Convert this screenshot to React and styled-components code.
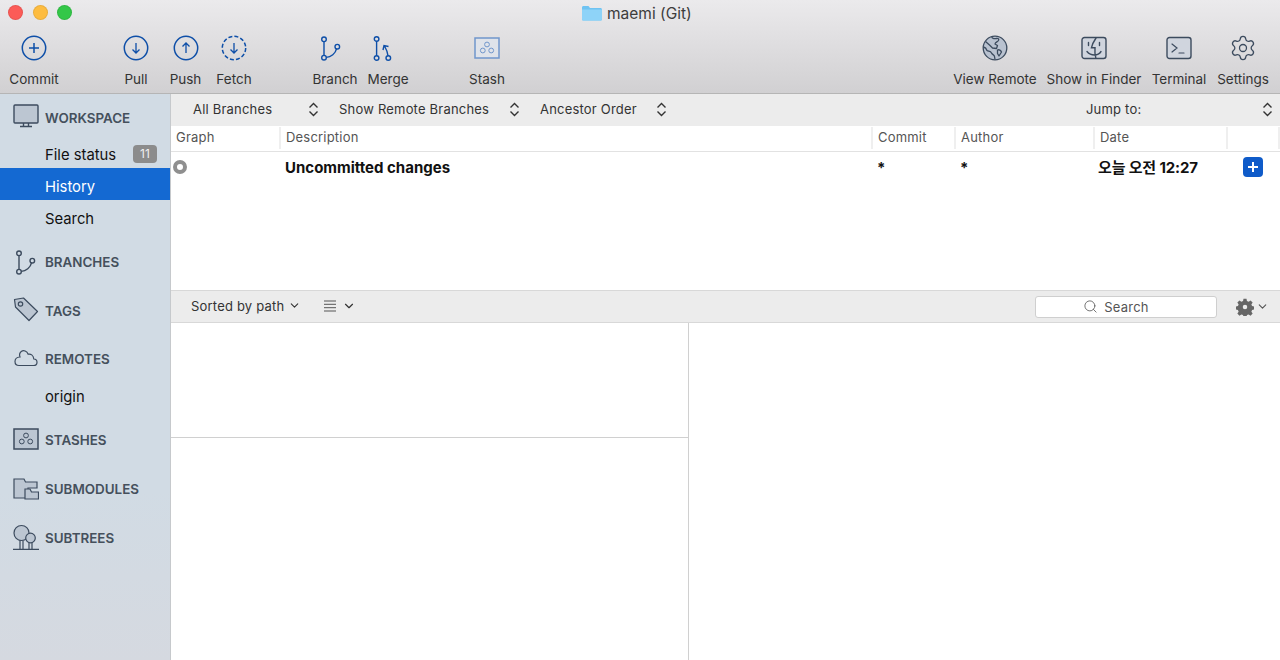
import styled, { createGlobalStyle } from "styled-components";
import { ChevronDown, Search as SearchIcon, Settings as SettingsIcon } from "lucide-react";

const BLUE = "#0e4fa8";
const SLATE = "#3c4b5e";
const FONT = `Inter, "Noto Sans CJK KR", sans-serif`;

const GlobalStyle = createGlobalStyle`
  html, body { margin: 0; padding: 0; height: 100%; overflow: hidden; }
  body { font-family: ${FONT}; color: #222; }
  * { box-sizing: border-box; }
  svg { flex: none; }
`;

// 툴바 아이콘
const Ring = ({ dashed, children }) => (
  <svg width="26" height="26" viewBox="0 0 26 26" fill="none" stroke={BLUE} strokeWidth="1.5">
    <circle cx="13" cy="13" r="11.7" strokeDasharray={dashed ? "4 2.13" : undefined} />
    {children}
  </svg>
);
const PlusRing = () => <Ring><path d="M13 8v10M8 13h10" /></Ring>;
const DownRing = ({ dashed }) => <Ring dashed={dashed}><path d="M13 8v10M9.5 14.5 13 18l3.5-3.5" strokeWidth="1.3" /></Ring>;
const UpRing = () => <Ring><path d="M13 18V8M9.5 11.5 13 8l3.5 3.5" strokeWidth="1.3" /></Ring>;

const BranchIcon = ({ color = BLUE }) => (
  <svg width="30" height="30" viewBox="0 0 30 30" fill="none" stroke={color} strokeWidth="1.4">
    <circle cx="4" cy="6.3" r="2.3" />
    <circle cx="4" cy="24.7" r="2.3" />
    <circle cx="17.300" cy="13.700" r="2.300" />
    <path d="M4 8.600v13.800M6.300 24.400C11 24 15.500 20.500 16.500 15.900" />
  </svg>
);
const MergeIcon = () => (
  <svg width="30" height="30" viewBox="0 0 30 30" fill="none" stroke={BLUE} strokeWidth="1.4">
    <circle cx="3.600" cy="6" r="2.300" />
    <circle cx="3.600" cy="25" r="2.300" />
    <circle cx="15.300" cy="25" r="2.300" />
    <path d="M3.600 8.300v14.400M15 22.700C14.700 19 13.500 16.500 11.500 13M10 17l1-4.500 4.500 1" />
  </svg>
);
const StashIcon = ({ color = "#7096cc", fill = "#dfe3ea", rings = "#7096cc" }) => (
  <svg width="26" height="22" viewBox="0 0 26 22" fill={fill} stroke={color} strokeWidth="1.5">
    <rect x="1" y="1" width="24" height="20" />
    <g fill="none" stroke={rings} strokeWidth="1">
      <circle cx="13" cy="7.500" r="2.400" />
      <circle cx="8.800" cy="13.500" r="2.400" />
      <circle cx="17.200" cy="13.500" r="2.400" />
    </g>
  </svg>
);
const GlobeIcon = () => (
  <svg width="26" height="26" viewBox="0 0 26 26" fill="#b9c2d0" stroke={SLATE} strokeWidth="1.3" strokeLinejoin="round">
    <circle cx="13" cy="13" r="11.800" />
    <path d="M10 1.500c-.5 2 2 2.500 4.500 2 1.500-.3 2.800.5 2 2-1 1.500-3.200 1.500-3.500 3.500l2.500 1.500-1 3-4-.5-3-3L3.500 6.500M1.500 12c2 .5 3 2 3.500 3.500 1.500 1 3.500.5 4.500 2.500.5 1.500 3 2 3 3.500l.5 3M15.500 15c1.500-.8 3.500.5 4 2l-2.500 4-1.500-2.500z" fill="none" />
  </svg>
);
const FinderIcon = () => (
  <svg width="26" height="24" viewBox="0 0 26 24" fill="#d0d5de" stroke={SLATE} strokeWidth="1.4" strokeLinecap="round">
    <rect x="1" y="1.500" width="24" height="21" rx="2.500" />
    <path d="M15 2c-2 3-3.800 6-4.600 9.800H14c-.3 3 0 6.700.8 10M7.500 6.500v3M18.500 6.500v3M6 15.500c2.500 3 6 3.500 7.500 3.500 2.500 0 5-1.200 6.500-3.500" fill="none" />
  </svg>
);
const TerminalIcon = () => (
  <svg width="26" height="24" viewBox="0 0 26 24" fill="#d0d5de" stroke={SLATE} strokeWidth="1.400" strokeLinecap="round">
    <rect x="1" y="1.500" width="24" height="21" rx="2.500" />
    <path d="m6 8 5 4-5 4M13 17h5" fill="none" strokeWidth="1.200" />
  </svg>
);
const GearIcon = () => (
  <SettingsIcon size={28} color={SLATE} strokeWidth={1.1} />
);

// 사이드바 아이콘
const MonitorIcon = () => (
  <svg width="26" height="24" viewBox="0 0 26 24" fill="#bcc6d2" stroke={SLATE} strokeWidth="1.4">
    <rect x="1" y="1" width="24" height="18" rx="1" />
    <path d="M10.500 19v3M15.500 19v3M7 22.500h12" fill="none" />
  </svg>
);
const TagIcon = () => (
  <svg width="26" height="26" viewBox="0 0 26 26" fill="#bcc6d2" stroke={SLATE} strokeWidth="1.200" strokeLinejoin="round">
    <path d="M1.500 2.500 10.500 1l14 13.500-8.500 9L2.500 10z" />
    <circle cx="7.500" cy="7" r="2.200" fill="none" />
  </svg>
);
const CloudIcon = () => (
  <svg width="24" height="18" viewBox="0 0 24 18" fill="none" stroke={SLATE} strokeWidth="1.200">
    <path d="M5 16.500h14.500c2.400 0 3.500-1.600 3.500-3.300 0-1.900-1.500-3.200-3.200-3.200C19.500 6 16.500 4.600 14.200 5.200 12.800 2 9.600 1 7.600 2.200 5.800 3.400 5.200 5.800 6 8 3 8.200 1 10 1 12.500c0 2.500 1.800 4 4 4z" />
  </svg>
);
const SubmoduleIcon = () => (
  <svg width="26" height="22" viewBox="0 0 26 22" fill="#bcc6d2" stroke={SLATE} strokeWidth="1.200">
    <path d="M1 1h10l1.500 3H24v6h-9v10H1z" />
    <path d="M12 11h5l1.500 3H25.500v7H12z" />
  </svg>
);
const TreeIcon = () => (
  <svg width="26" height="26" viewBox="0 0 26 26" fill="#bcc6d2" stroke={SLATE} strokeWidth="1.200">
    <circle cx="8.500" cy="9" r="7.500" />
    <circle cx="17.500" cy="14" r="4.800" />
    <path d="M7 16v9M10 16.500V25M16 18.800V25M19 18.800V25M0 25.300h26" fill="none" />
  </svg>
);
const UpDown = () => (
  <svg width="13" height="15" viewBox="0 0 13 15" fill="none" stroke="#333" strokeWidth="1.400">
    <path d="M2.500 5.500 6.500 1.500l4 4M2.500 9.500l4 4 4-4" />
  </svg>
);

const Window = styled.div`
  width: 1280px;
  height: 660px;
  display: flex;
  flex-direction: column;
  background: #fff;
  overflow: hidden;
`;

const TitleBar = styled.header`
  height: 94px;
  flex: none;
  position: relative;
  padding-top: 26px;
  background: linear-gradient(#ebeaec, #d1d0d2);
  border-bottom: 1px solid #b5b5b5;
`;

const Lights = styled.div`
  position: absolute;
  left: 8px;
  top: 5px;
  display: flex;
  gap: 9.500px;
`;

const Light = styled.span`
  width: 15px;
  height: 15px;
  border-radius: 50%;
  background: ${(p) => p.$color};
  border: 1px solid rgba(0, 0, 0, 0.08);
`;

const Title = styled.div`
  position: absolute;
  top: 3px;
  left: 582px;
  display: flex;
  align-items: center;
  gap: 5px;
  font-size: 15.500px;
  color: #3d3d3d;
  height: 20px;
`;

const Toolbar = styled.div`
  display: flex;
  padding-right: 10px;
`;

const ToolSpacer = styled.div`
  flex: 1;
`;

const Tool = styled.div`
  width: ${(p) => p.$w}px;
  margin-left: ${(p) => p.$ml || 0}px;
  flex: none;
  display: flex;
  flex-direction: column;
  align-items: center;
`;

const ToolIcon = styled.div`
  height: 32px;
  margin-top: 6px;
  flex: none;
  display: flex;
  align-items: center;
  justify-content: center;
`;

const ToolLabel = styled.div`
  margin-top: 7px;
  font-size: 13.500px;
  line-height: 17px;
  color: #333;
  white-space: nowrap;
`;

const Body = styled.div`
  flex: 1;
  display: flex;
  min-height: 0;
`;

const Sidebar = styled.aside`
  width: 171px;
  flex: none;
  padding-top: 8px;
  background: linear-gradient(#d1dbe4 70%, #d5d9e0);
  border-right: 1px solid #c6c9cc;
`;

const Section = styled.div`
  height: ${(p) => p.$h}px;
  margin: ${(p) => p.$mt || 0}px 0 ${(p) => p.$mb || 0}px;
  display: flex;
  align-items: center;
  padding-left: 13px;
  gap: 6px;
  font-size: 13.400px;
  font-weight: 600;
  color: #45505c;
`;

const SectionIcon = styled.div`
  width: 26px;
  display: flex;
  align-items: center;
  justify-content: center;
  transform: translate(${(p) => p.$dx || 0}px, ${(p) => p.$dy || 0}px);
`;

const NavItem = styled.div`
  height: 32px;
  display: flex;
  align-items: center;
  justify-content: space-between;
  padding: 6px 13px 0 45px;
  font-size: 14.800px;
  color: ${(p) => (p.$active ? "#fff" : "#111")};
  background: ${(p) => (p.$active ? "#1469d2" : "transparent")};
`;

const Badge = styled.span`
  width: 24px;
  height: 18px;
  margin-top: -2px;
  border-radius: 4px;
  background: #8c8c8c;
  color: #f0f0f0;
  font-size: 12px;
  text-align: center;
  line-height: 18px;
`;

const Main = styled.main`
  flex: 1;
  min-width: 0;
  display: flex;
  flex-direction: column;
`;

const FilterBar = styled.div`
  height: 32px;
  flex: none;
  display: flex;
  align-items: center;
  padding-bottom: 2px;
  background: #ececec;
  font-size: 13px;
  color: #333;
`;

const Select = styled.div`
  width: ${(p) => p.$w}px;
  margin-left: ${(p) => p.$ml || 0}px;
  display: flex;
  align-items: center;
  justify-content: space-between;
  letter-spacing: 0.2px;
  white-space: nowrap;
`;

const HeaderRow = styled.div`
  height: 26px;
  flex: none;
  display: flex;
  border-bottom: 1px solid #e2e2e2;
  padding: 1px 0 2px;
`;

const HeaderCell = styled.div`
  width: ${(p) => p.$w}px;
  flex: ${(p) => (p.$w ? "none" : 1)};
  padding-left: 5px;
  font-size: 13px;
  line-height: 20px;
  color: #555;
  letter-spacing: 0.2px;
  border-right: 2px solid #efefef;
`;

const CommitRow = styled.div`
  height: 30px;
  flex: none;
  display: flex;
  align-items: center;
  font-size: 15px;
  font-weight: 700;
  color: #111;
`;

const RowCell = styled.div`
  width: ${(p) => p.$w}px;
  flex: ${(p) => (p.$w ? "none" : 1)};
  padding-left: ${(p) => p.$pl ?? 4}px;
  display: flex;
  align-items: center;
  white-space: nowrap;
`;

const DateText = styled.span`
  letter-spacing: -0.15px;
  margin-top: -1px;
`;

const GraphDot = styled.span`
  width: 14px;
  height: 14px;
  border-radius: 50%;
  border: 4px solid #8f8f8f;
  background: #fff;
`;

const AddButton = styled.span`
  width: 20px;
  height: 20px;
  border-radius: 4px;
  background: #0f5bc9;
  display: flex;
  align-items: center;
  justify-content: center;
`;

const CommitList = styled.div`
  height: 108px;
  flex: none;
`;

const DetailBar = styled.div`
  height: 33px;
  flex: none;
  display: flex;
  align-items: center;
  background: #ececec;
  border-top: 1px solid #d8d8d8;
  border-bottom: 1px solid #d8d8d8;
  font-size: 13px;
  color: #333;
  letter-spacing: 0.2px;
`;

const Dropdown = styled.div`
  display: flex;
  align-items: center;
  gap: 4px;
  margin-left: ${(p) => p.$ml}px;
  padding-bottom: 2px;
`;

const ListChevron = styled(ChevronDown)`
  margin-left: 2px;
`;

const SearchBox = styled.div`
  width: 182px;
  height: 22px;
  margin-left: auto;
  padding-right: 20px;
  display: flex;
  align-items: center;
  justify-content: center;
  gap: 6px;
  background: #fff;
  border: 1px solid #cfcfcf;
  border-radius: 3px;
  color: #555;
`;

const GearMenu = styled.div`
  display: flex;
  align-items: center;
  gap: 2px;
  margin: 0 11px 0 19px;
`;

const Panes = styled.div`
  flex: 1;
  display: flex;
  min-height: 0;
`;

const LeftPane = styled.div`
  width: 518px;
  flex: none;
  border-right: 1px solid #d0d0d0;
`;

const FileList = styled.div`
  height: 115px;
  border-bottom: 1px solid #d0d0d0;
`;

const App = () => (
  <>
    <GlobalStyle />
    <Window>
      <TitleBar>
        <Lights>
          <Light $color="#fc5b57" />
          <Light $color="#fdbc40" />
          <Light $color="#33c748" />
        </Lights>
        <Title>
          <svg width="20" height="16" viewBox="0 0 20 16">
            <path d="M0 2.500C0 1.500.7 1 1.500 1h5L8 3h10.500c.8 0 1.500.6 1.500 1.500V14c0 1-.7 1.500-1.500 1.500h-17C.7 15.500 0 15 0 14z" fill="#6fc3f2" />
            <path d="M0 4.500h20V14c0 1-.7 1.500-1.500 1.500h-17C.7 15.500 0 15 0 14z" fill="#8ed3f8" />
          </svg>
          maemi (Git)
        </Title>
        <Toolbar>
          <Tool $w={68}><ToolIcon><PlusRing /></ToolIcon><ToolLabel>Commit</ToolLabel></Tool>
          <Tool $w={48} $ml={44}><ToolIcon><DownRing /></ToolIcon><ToolLabel>Pull</ToolLabel></Tool>
          <Tool $w={49} $ml={1}><ToolIcon><UpRing /></ToolIcon><ToolLabel>Push</ToolLabel></Tool>
          <Tool $w={48}><ToolIcon><DownRing dashed /></ToolIcon><ToolLabel>Fetch</ToolLabel></Tool>
          <Tool $w={54} $ml={50}><ToolIcon><BranchIcon /></ToolIcon><ToolLabel>Branch</ToolLabel></Tool>
          <Tool $w={52}><ToolIcon><MergeIcon /></ToolIcon><ToolLabel>Merge</ToolLabel></Tool>
          <Tool $w={60} $ml={43}><ToolIcon><StashIcon /></ToolIcon><ToolLabel>Stash</ToolLabel></Tool>
          <ToolSpacer />
          <Tool $w={84}><ToolIcon><GlobeIcon /></ToolIcon><ToolLabel>View Remote</ToolLabel></Tool>
          <Tool $w={96} $ml={9}><ToolIcon><FinderIcon /></ToolIcon><ToolLabel>Show in Finder</ToolLabel></Tool>
          <Tool $w={56} $ml={9}><ToolIcon><TerminalIcon /></ToolIcon><ToolLabel>Terminal</ToolLabel></Tool>
          <Tool $w={54} $ml={9}><ToolIcon><GearIcon /></ToolIcon><ToolLabel>Settings</ToolLabel></Tool>
        </Toolbar>
      </TitleBar>
      <Body>
        <Sidebar>
          <Section $h={32} $mb={2}><SectionIcon $dy={-2}><MonitorIcon /></SectionIcon>WORKSPACE</Section>
          <NavItem>File status<Badge>11</Badge></NavItem>
          <NavItem $active>History</NavItem>
          <NavItem>Search</NavItem>
          <Section $h={60}><SectionIcon $dx={4}><BranchIcon color={SLATE} /></SectionIcon>BRANCHES</Section>
          <Section $h={38}><SectionIcon $dy={-1}><TagIcon /></SectionIcon>TAGS</Section>
          <Section $h={38} $mt={10}><SectionIcon $dy={-1}><CloudIcon /></SectionIcon>REMOTES</Section>
          <NavItem>origin</NavItem>
          <Section $h={60}><SectionIcon $dy={-1}><StashIcon color={SLATE} fill="#bcc6d2" rings={SLATE} /></SectionIcon>STASHES</Section>
          <Section $h={38}><SectionIcon><SubmoduleIcon /></SectionIcon>SUBMODULES</Section>
          <Section $h={60}><SectionIcon $dy={-1}><TreeIcon /></SectionIcon>SUBTREES</Section>
        </Sidebar>
        <Main>
          <FilterBar>
            <Select $w={127} $ml={22}>All Branches<UpDown /></Select>
            <Select $w={182} $ml={19}>Show Remote Branches<UpDown /></Select>
            <Select $w={128} $ml={19}>Ancestor Order<UpDown /></Select>
            <Select $w={188} $ml={418}>Jump to:<UpDown /></Select>
          </FilterBar>
          <HeaderRow>
            <HeaderCell $w={110}>Graph</HeaderCell>
            <HeaderCell>Description</HeaderCell>
            <HeaderCell $w={83}>Commit</HeaderCell>
            <HeaderCell $w={139}>Author</HeaderCell>
            <HeaderCell $w={133}>Date</HeaderCell>
            <HeaderCell $w={52} />
          </HeaderRow>
          <CommitRow>
            <RowCell $w={110} $pl={2}><GraphDot /></RowCell>
            <RowCell>Uncommitted changes</RowCell>
            <RowCell $w={83}>*</RowCell>
            <RowCell $w={139}>*</RowCell>
            <RowCell $w={133} $pl={3}><DateText>오늘 오전 12:27</DateText></RowCell>
            <RowCell $w={52} $pl={15}>
              <AddButton>
                <svg width="12" height="12" viewBox="0 0 12 12"><path d="M6 1v10M1 6h10" stroke="#fff" strokeWidth="2" /></svg>
              </AddButton>
            </RowCell>
          </CommitRow>
          <CommitList />
          <DetailBar>
            <Dropdown $ml={20}>Sorted by path<ChevronDown size={13} /></Dropdown>
            <Dropdown $ml={23}>
              <svg width="12" height="12" viewBox="0 0 12 12"><path d="M0 1h12M0 4.300h12M0 7.700h12M0 11h12" stroke="#555" /></svg>
              <ListChevron size={14} />
            </Dropdown>
            <SearchBox><SearchIcon size={15} strokeWidth={1.3} />Search</SearchBox>
            <GearMenu>
              <svg width="18" height="18" viewBox="0 0 24 24">
                <path fill="#666" fillRule="evenodd" d="M10 1h4l.6 3 2.200.9 2.600-1.700 2.800 2.800-1.700 2.600.9 2.200 3 .6v4l-3 .6-.9 2.200 1.700 2.600-2.800 2.800-2.600-1.700-2.200.9-.6 3h-4l-.6-3-2.200-.9-2.600 1.700-2.800-2.800 1.700-2.600-.9-2.200-3-.6v-4l3-.6.9-2.200-1.700-2.600 2.800-2.800 2.600 1.700 2.200-.9zM12 9a3 3 0 1 0 0 6 3 3 0 0 0 0-6z" />
              </svg>
              <ChevronDown size={13} color="#555" />
            </GearMenu>
          </DetailBar>
          <Panes>
            <LeftPane><FileList /></LeftPane>
          </Panes>
        </Main>
      </Body>
    </Window>
  </>
);

export default App;
